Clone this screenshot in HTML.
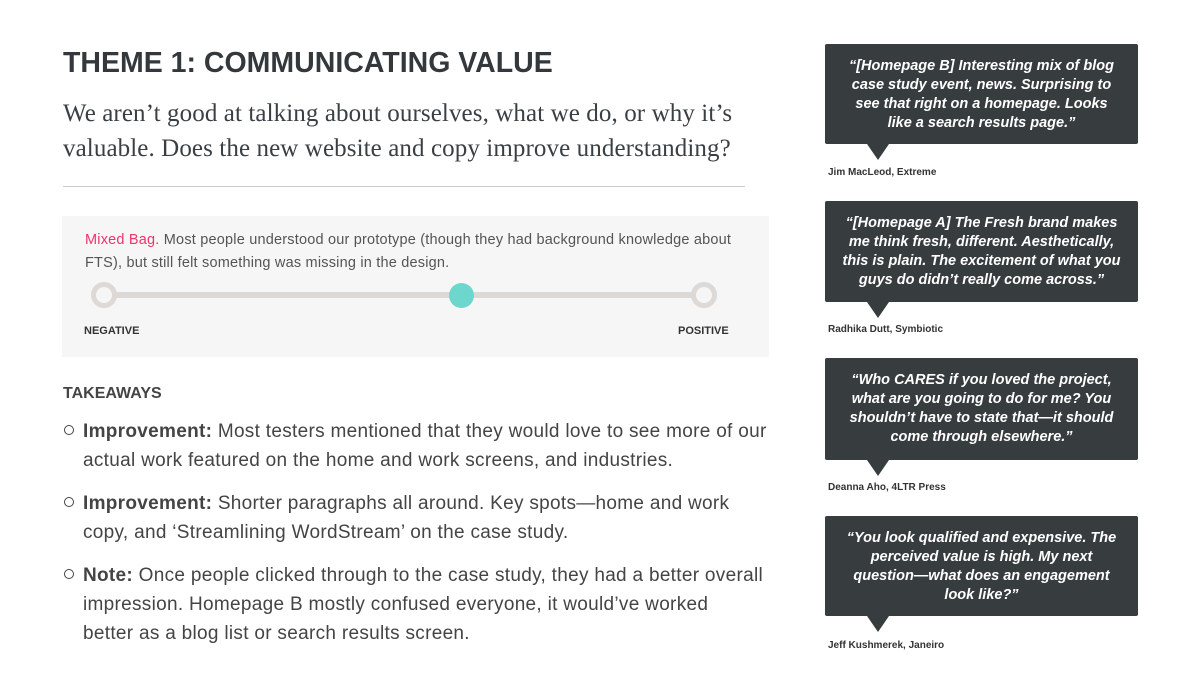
<!DOCTYPE html>
<html><head><meta charset="utf-8"><style>
*{margin:0;padding:0;box-sizing:border-box}
body{width:1200px;height:675px;background:#fff;position:relative;font-family:"Liberation Sans",sans-serif;color:#3a3f44;overflow:hidden}
.a{position:absolute}
h1{position:absolute;left:63px;top:47px;font-size:28.5px;font-weight:bold;color:#33383d;letter-spacing:0}
.sub{left:63px;top:96px;font-family:"Liberation Serif",serif;font-size:25px;line-height:35px;color:#3a3f44;letter-spacing:0.1px;white-space:nowrap}
.rule{left:63px;top:186px;width:682px;height:1px;background:#ccc}
.panel{left:62px;top:216px;width:707px;height:141px;background:#f6f6f6}
.ptext{left:85px;top:229px;font-size:14.5px;line-height:23px;color:#555;letter-spacing:0.2px;white-space:nowrap}
.track{left:104px;top:292px;width:600px;height:6px;background:#dcd9d6}
.ring{width:26px;height:26px;border-radius:50%;border:5px solid #dcd9d6;background:#f6f6f6}
.dot{left:449px;top:283px;width:25px;height:25px;border-radius:50%;background:#6dd7cd}
.lab{font-size:11px;font-weight:bold;color:#333}
.tk{left:63px;top:385px;font-size:16px;font-weight:bold;color:#444}
.li{left:83px;font-size:19px;line-height:29px;color:#444;white-space:nowrap;letter-spacing:0.3px}
.bul{left:64px;width:10px;height:10px;border:1.5px solid #444;border-radius:50%}
.q{left:825px;width:313px;background:#373c3f;border-radius:2px;color:#fff;font-style:italic;font-weight:bold;font-size:14.5px;line-height:19px;text-align:center;padding:13px 0 0;white-space:nowrap}
.q:after{content:"";position:absolute;left:42px;bottom:-16px;border-left:11px solid transparent;border-right:11px solid transparent;border-top:16px solid #373c3f}
.nm{left:828px;font-size:10px;font-weight:bold;color:#333}
</style></head><body>
<h1>THEME 1: COMMUNICATING VALUE</h1>
<div class="a sub">We aren’t good at talking about ourselves, what we do, or why it’s<br>valuable. Does the new website and copy improve understanding?</div>
<div class="a rule"></div>
<div class="a panel"></div>
<div class="a ptext"><span style="color:#f0336b">Mixed Bag.</span> Most people understood our prototype (though they had background knowledge about<br>FTS), but still felt something was missing in the design.</div>
<div class="a track"></div>
<div class="a ring" style="left:91px;top:282px"></div>
<div class="a ring" style="left:691px;top:282px"></div>
<div class="a dot"></div>
<div class="a lab" style="left:84px;top:325px">NEGATIVE</div>
<div class="a lab" style="left:678px;top:325px">POSITIVE</div>
<div class="a tk">TAKEAWAYS</div>
<div class="a bul" style="top:425px"></div>
<div class="a li" style="top:417px"><b>Improvement:</b> Most testers mentioned that they would love to see more of our<br>actual work featured on the home and work screens, and industries.</div>
<div class="a bul" style="top:497px"></div>
<div class="a li" style="top:489px"><b>Improvement:</b> Shorter paragraphs all around. Key spots—home and work<br>copy, and ‘Streamlining WordStream’ on the case study.</div>
<div class="a bul" style="top:569px"></div>
<div class="a li" style="top:561px"><b>Note:</b> Once people clicked through to the case study, they had a better overall<br>impression. Homepage B mostly confused everyone, it would’ve worked<br>better as a blog list or search results screen.</div>

<div class="a q" style="top:44px;height:100px">“[Homepage B] Interesting mix of blog<br>case study event, news. Surprising to<br>see that right on a homepage. Looks<br>like a search results page.”</div>
<div class="a nm" style="top:167px">Jim MacLeod, Extreme</div>
<div class="a q" style="top:201px;height:101px">“[Homepage A] The Fresh brand makes<br>me think fresh, different. Aesthetically,<br>this is plain. The excitement of what you<br>guys do didn’t really come across.”</div>
<div class="a nm" style="top:324px">Radhika Dutt, Symbiotic</div>
<div class="a q" style="top:358px;height:102px">“Who CARES if you loved the project,<br>what are you going to do for me? You<br>shouldn’t have to state that—it should<br>come through elsewhere.”</div>
<div class="a nm" style="top:482px">Deanna Aho, 4LTR Press</div>
<div class="a q" style="top:516px;height:100px">“You look qualified and expensive. The<br>perceived value is high. My next<br>question—what does an engagement<br>look like?”</div>
<div class="a nm" style="top:640px">Jeff Kushmerek, Janeiro</div>
</body></html>
